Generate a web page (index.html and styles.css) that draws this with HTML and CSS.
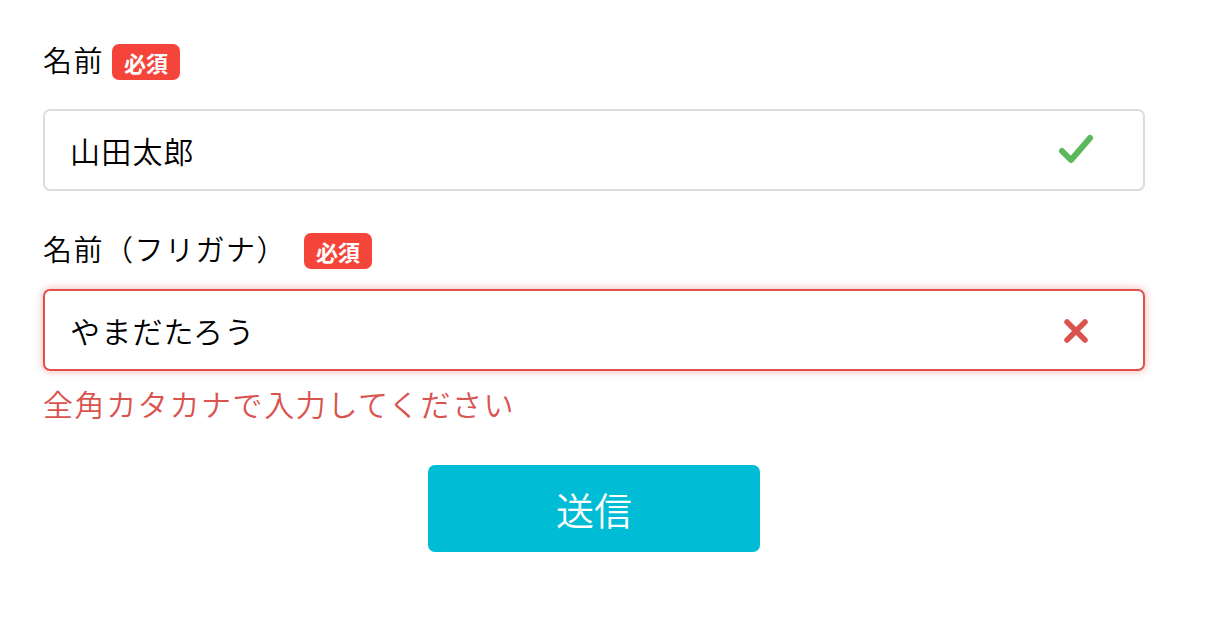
FILE: index.html
```html
<!DOCTYPE html>
<html lang="ja">
<head>
<meta charset="utf-8">
<title>フォーム</title>
<link rel="stylesheet" href="styles.css">
</head>
<body>
<form class="form">
  <div class="field">
    <div class="label-row label-row--first">
      <span class="label">名前</span>
      <span class="badge">必須</span>
    </div>
    <div class="input-wrap">
      <input class="input is-valid" type="text" value="山田太郎">
      <svg class="icon icon-check" width="36" height="30" viewBox="0 0 36 30"><path d="M4 17 L13 26 L32 4" fill="none" stroke="#5cb85c" stroke-width="6" stroke-linecap="round" stroke-linejoin="round"/></svg>
    </div>
  </div>
  <div class="field">
    <div class="label-row">
      <span class="label">名前（フリガナ）</span>
      <span class="badge">必須</span>
    </div>
    <div class="input-wrap">
      <input class="input is-invalid" type="text" value="やまだたろう">
      <svg class="icon icon-x" width="26" height="26" viewBox="0 0 26 26"><path d="M4 4 L22 22 M22 4 L4 22" fill="none" stroke="#d9534f" stroke-width="5.5" stroke-linecap="round"/></svg>
    </div>
    <p class="error">全角カタカナで入力してください</p>
  </div>
  <div class="actions">
    <button class="submit" type="button">送信</button>
  </div>
</form>
</body>
</html>
```
FILE: styles.css
```css
* { box-sizing: border-box; }
body {
  margin: 0;
  background: #fff;
  font-family: "Noto Sans CJK JP", "Noto Sans", sans-serif;
  font-weight: 350;
  color: #000;
}
.form {
  width: 1102px;
  margin-left: 43px;
  padding-top: 44px;
}
.field { margin-bottom: 42px; }
.field:nth-child(2) { margin-bottom: 0; }
.label-row {
  display: flex;
  align-items: center;
  height: 36px;
  margin-bottom: 20px;
}
.label-row--first { margin-bottom: 29px; }
.label {
  font-size: 29px;
  line-height: 36px;
  letter-spacing: 1.5px;
  margin-right: 8px;
  margin-top: -6px;
}
.field:nth-child(2) .label { margin-right: 17px; }
.badge {
  display: inline-flex;
  align-items: center;
  justify-content: center;
  width: 68px;
  height: 36px;
  border-radius: 7px;
  background: #f5453a;
  color: #fff;
  font-weight: bold;
  font-size: 22px;
}
.input-wrap { position: relative; }
.input {
  display: block;
  width: 100%;
  height: 82px;
  padding: 0 25px;
  border: 2px solid #dcdcdc;
  border-radius: 7px;
  font-family: inherit;
  font-weight: 350;
  font-size: 30px;
  letter-spacing: 1.2px;
  color: #000;
  outline: none;
  background: #fff;
}
.input.is-invalid {
  border-color: #e0514b;
  box-shadow: 0 0 8px rgba(224, 81, 75, 0.45);
}
.icon { position: absolute; top: 50%; }
.icon-check { left: 1015px; margin-top: -16px; }
.icon-x { left: 1020px; margin-top: -12px; }
.error {
  margin: 11px 0 0;
  font-size: 30px;
  line-height: 42px;
  color: #d9534f;
  letter-spacing: 1.6px;
}
.actions {
  display: flex;
  justify-content: center;
  margin-top: 41px;
}
.submit {
  width: 332px;
  height: 87px;
  border: none;
  border-radius: 7px;
  background: #00bcd4;
  color: #fff;
  font-family: inherit;
  font-weight: 350;
  font-size: 38px;
}
```
